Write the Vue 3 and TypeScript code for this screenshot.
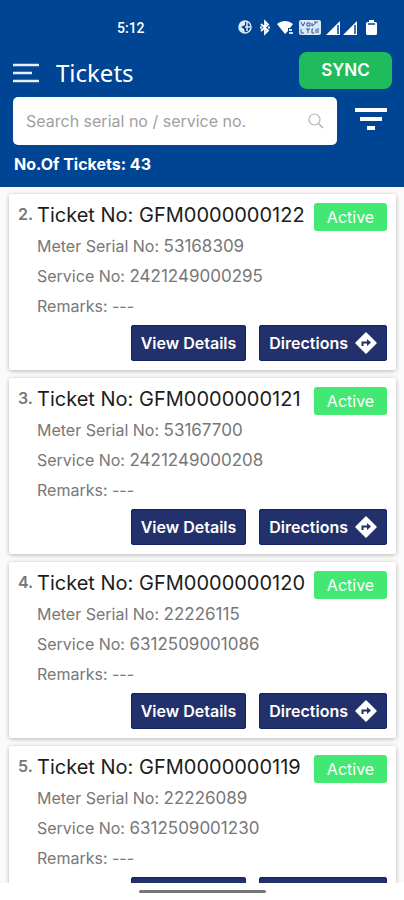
<script setup lang="ts">
import { ref, computed } from 'vue'

interface Ticket {
  index: number
  ticketNo: string
  meterSerial: string
  serviceNo: string
  remarks: string
  status: string
}

const total = 43
const query = ref('')

const tickets: Ticket[] = [
  { index: 2, ticketNo: 'GFM0000000122', meterSerial: '53168309', serviceNo: '2421249000295', remarks: '---', status: 'Active' },
  { index: 3, ticketNo: 'GFM0000000121', meterSerial: '53167700', serviceNo: '2421249000208', remarks: '---', status: 'Active' },
  { index: 4, ticketNo: 'GFM0000000120', meterSerial: '22226115', serviceNo: '6312509001086', remarks: '---', status: 'Active' },
  { index: 5, ticketNo: 'GFM0000000119', meterSerial: '22226089', serviceNo: '6312509001230', remarks: '---', status: 'Active' },
]

const visible = computed(() =>
  tickets.filter((t) => t.meterSerial.includes(query.value) || t.serviceNo.includes(query.value)),
)
</script>

<template>
  <div class="screen">
    <header class="header">
      <div class="status">
        <span class="clock">5:12</span>
        <svg class="status-icons" width="142" height="18" viewBox="-1 1 142 18" aria-hidden="true">
          <!-- data saver -->
          <circle cx="8" cy="9" r="6" fill="none" stroke="#dfe8f6" stroke-width="1.5" />
          <path d="M8 3a6 6 0 0 0 0 12l-1-4-3-2 4-2z" fill="#dfe8f6" />
          <path d="M8 9h5M10 4v9" stroke="#dfe8f6" stroke-width="1.5" />
          <!-- bluetooth -->
          <path d="M24 6l7 6.500-3 3V3.500l3 3L24 13" fill="none" stroke="#fff" stroke-width="1.800" />
          <path d="M23 9.500h2M31 9.500h2" stroke="#fff" stroke-width="1.800" />
          <!-- wifi -->
          <path d="M40 6c5-4 11-4 16 0l-3 4h-2v3l-3 3z" fill="#fff" />
          <path d="M52 12h3M52 15h4" stroke="#cfdcf0" stroke-width="2" />
          <!-- voice over network -->
          <rect x="62" y="2" width="22" height="15" rx="2" fill="#dce6f5" />
          <path d="M64 4l2 4 2-4M70 5h3v3h-3zM64 11v4h3M69 11h4M71 11v4M75 5v3M77 4h4M76 11h-1v4h2M79 11v4M81 10v5M75 8l4-3" fill="none" stroke="#2459a5" stroke-width="1" />
          <!-- signal -->
          <path d="M89 17L103 3v14z" fill="#fff" />
          <path d="M101 7v9" stroke="#004494" stroke-width="1.500" />
          <path d="M106 17L120 3v14z" fill="#fff" />
          <path d="M118 7v9" stroke="#004494" stroke-width="1.500" />
          <!-- battery -->
          <path d="M132 2h5v2h1.500q1.500 0 1.500 1.500v10q0 1.500-1.500 1.500h-8q-1.500 0-1.500-1.500v-10q0-1.500 1.500-1.500H132z" fill="#fff" />
          <path d="M131 6h7" stroke="#004494" stroke-width="1.500" />
        </svg>
      </div>

      <div class="bar">
        <button class="icon-btn menu" type="button" aria-label="Menu">
          <svg width="27" height="20" viewBox="0 0 27 20">
            <path d="M0 2h26M0 10h19M0 18h26" stroke="#e6eefa" stroke-width="2.500" />
          </svg>
        </button>
        <h1 class="title">Tickets</h1>
        <button class="sync" type="button">SYNC</button>
      </div>

      <div class="search-row">
        <div class="search">
          <input v-model="query" type="text" aria-label="Search serial no / service no." placeholder="Search serial no / service no." />
          <svg width="16" height="16" viewBox="0 0 16 16" aria-hidden="true">
            <circle cx="6.500" cy="6.500" r="5.500" fill="none" stroke="#b4b4b4" stroke-width="1.200" />
            <path d="M10.500 10.500L15 15" stroke="#b4b4b4" stroke-width="1.500" />
          </svg>
        </div>
        <button class="icon-btn filter" type="button" aria-label="Filter">
          <svg width="34" height="22" viewBox="0 0 34 22">
            <path d="M1 2h32M6 11h22M13 20h8" stroke="#fff" stroke-width="4" />
          </svg>
        </button>
      </div>

      <p class="count">No.Of Tickets: {{ total }}</p>
    </header>

    <main class="list">
      <article v-for="t in visible" :key="t.ticketNo" class="card">
        <div class="head">
          <span class="num">{{ t.index }}.</span>
          <h2 class="ticket">Ticket No: {{ t.ticketNo }}</h2>
          <span class="badge">{{ t.status }}</span>
        </div>
        <div class="details">
          <p>Meter Serial No: <span class="value">{{ t.meterSerial }}</span></p>
          <p>Service No: <span class="value">{{ t.serviceNo }}</span></p>
          <p>Remarks: {{ t.remarks }}</p>
        </div>
        <div class="actions">
          <button class="action" type="button">View Details</button>
          <button class="action" type="button">
            Directions
            <svg width="22" height="22" viewBox="0 0 22 22" aria-hidden="true">
              <path d="M11 1L21 11 11 21 1 11z" fill="#fff" stroke="#fff" stroke-width="1.500" stroke-linejoin="round" />
              <path d="M7.500 14v-3.500h5" fill="none" stroke="#22316c" stroke-width="2" />
              <path d="M12 7l4 3.500-4 3.500z" fill="#22316c" />
            </svg>
          </button>
        </div>
      </article>
    </main>

    <footer class="gesture"><span class="handle"></span></footer>
  </div>
</template>

<style>
body {
  margin: 0;
  background: #fff;
}
</style>

<style scoped>
.screen {
  display: flex;
  flex-direction: column;
  height: 100vh;
  font-family: Inter, "Liberation Sans", sans-serif;
  background: #fff;
}
h1,
h2,
p {
  margin: 0;
  font-weight: 400;
}
button {
  font-family: inherit;
  border: 0;
  cursor: pointer;
}
.header {
  flex: none;
  background: #004494;
  color: #fff;
  padding-bottom: 12px;
}
.status {
  display: flex;
  align-items: center;
  justify-content: space-between;
  padding: 18px 26px 0 117px;
  height: 20px;
}
.clock {
  font: 500 14px Roboto, sans-serif;
}
.bar {
  display: flex;
  align-items: center;
  padding: 13px 12px 0 13px;
}
.icon-btn {
  display: flex;
  padding: 0;
  background: none;
}
.menu {
  padding-top: 5px;
}
.filter {
  padding-bottom: 4px;
}
.title {
  flex: 1;
  margin-left: 16px;
  padding-top: 6px;
  font: 400 24px/32px "Noto Sans", sans-serif;
}
.sync {
  width: 93px;
  height: 37px;
  border-radius: 8px;
  background: #1fbb5c;
  color: #fff;
  font-size: 17px;
  font-weight: 600;
}
.search-row {
  display: flex;
  align-items: center;
  gap: 17px;
  padding: 8px 16px 0 13px;
}
.search {
  flex: 1;
  display: flex;
  align-items: center;
  height: 48px;
  padding: 0 13px;
  border-radius: 5px;
  background: #fff;
}
.search input {
  flex: 1;
  min-width: 0;
  padding: 0;
  border: 0;
  outline: 0;
  background: none;
  font: 400 16px Inter, sans-serif;
  color: #333;
}
.search input::placeholder {
  color: #a0a0a0;
  opacity: 1;
}
.count {
  padding: 8px 14px 0;
  font-size: 16px;
  line-height: 22px;
  font-weight: 700;
}
.list {
  flex: 1;
  min-height: 0;
  overflow-y: auto;
  scrollbar-width: none;
  display: flex;
  flex-direction: column;
  gap: 8px;
  padding: 7px 8px 0 9px;
  background: #fafafa;
}
.card {
  flex: none;
  padding: 6px 9px 9px;
  background: #fff;
  border-radius: 2px;
  box-shadow: 0 1px 4px rgba(0, 0, 0, 0.28);
}
.head {
  display: flex;
  height: 31px;
}
.num {
  width: 19px;
  font-size: 16px;
  line-height: 28px;
  font-weight: 600;
  color: #777;
}
.ticket {
  flex: 1;
  white-space: nowrap;
  font-size: 20px;
  line-height: 31px;
  color: #1c1c1c;
}
.badge {
  align-self: flex-end;
  width: 73px;
  height: 28px;
  border-radius: 3px;
  background: #43e873;
  color: #fff;
  font-size: 16px;
  line-height: 29px;
  text-align: center;
}
.details {
  padding-left: 19px;
  font-size: 16px;
  color: #777;
}
.details p {
  height: 30px;
  line-height: 30px;
}
.value {
  font-size: 17px;
}
.actions {
  display: flex;
  justify-content: flex-end;
  gap: 13px;
  padding-top: 4px;
}
.action {
  display: flex;
  align-items: center;
  gap: 7px;
  height: 36px;
  padding: 0 10px;
  border-radius: 3px;
  background: #22316c;
  box-shadow: inset 0 0 0 1px #14206b;
  color: #fff;
  font-size: 16px;
  font-weight: 600;
  white-space: nowrap;
}
.gesture {
  flex: none;
  display: flex;
  justify-content: center;
  align-items: center;
  height: 17px;
  background: #fff;
}
.handle {
  width: 127px;
  height: 3px;
  border-radius: 2px;
  background: #777;
}
</style>
